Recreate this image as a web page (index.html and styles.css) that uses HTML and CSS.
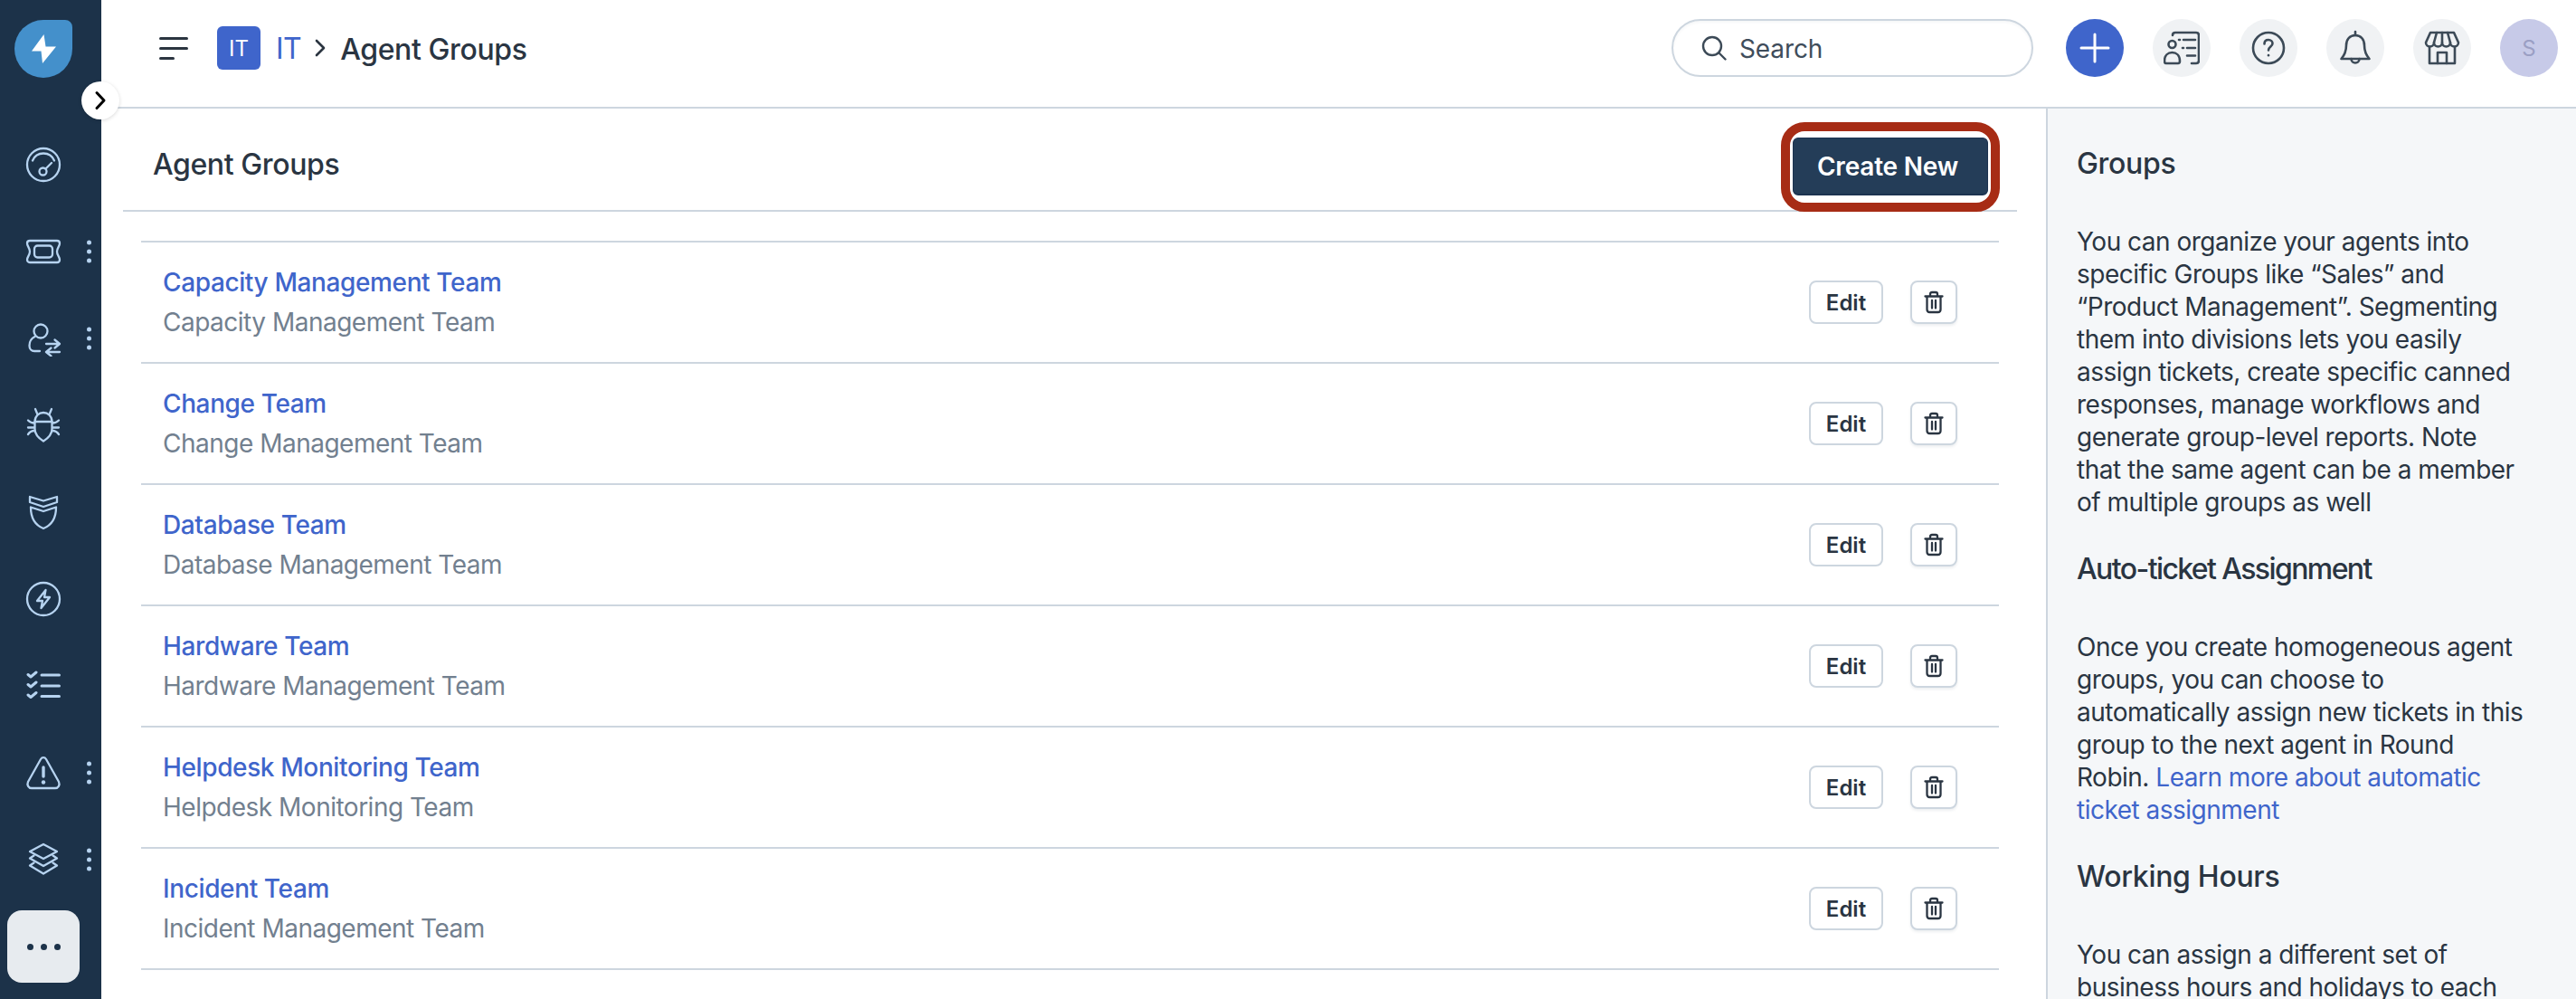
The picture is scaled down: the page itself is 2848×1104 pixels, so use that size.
FILE: index.html
```html
<!DOCTYPE html>
<html lang="en">
  <head>
    <meta charset="UTF-8" />
    <title>Agent Groups</title>
    <link rel="stylesheet" href="styles.css">
  </head>
  <body>
    <aside id="sidebar">
      <div class="logo">
        <svg viewBox="0 0 29 32" width="29" height="32"><path d="M14.500 0 1 18.500H11.500L13 32 28 13.500H16.500Z" fill="#fff"/></svg>
      </div>
      <a href="javascript:;" class="collapse">
        <svg viewBox="0 0 16 24" width="16" height="24"><path d="M4 3.500 12 12 4 20.500" fill="none" stroke="#000" stroke-width="3" stroke-linecap="round" stroke-linejoin="round"/></svg>
      </a>
      <nav class="side-nav">
        <a href="javascript:;" class="side-item">
          <svg class="side-icon" viewBox="0 0 40 40"><circle cx="20" cy="20" r="18"/><path d="M8 15.500A13 13 0 0 1 32 15.500"/><circle cx="19.500" cy="27.500" r="4"/><path d="M22.500 24.500 29 18"/></svg>
        </a>
        <a href="javascript:;" class="side-item">
          <svg class="side-icon" viewBox="0 0 40 40"><path d="M5 8H35C37 8 38 9.500 38 11 38 14 35 16 35 20 35 24 38 26 38 29 38 30.500 37 32 35 32H5C3 32 2 30.500 2 29 2 26 5 24 5 20 5 16 2 14 2 11 2 9.500 3 8 5 8Z"/><rect x="10" y="13.500" width="20" height="13" rx="3.500"/></svg>
          <span class="kebab"><i></i><i></i><i></i></span>
        </a>
        <a href="javascript:;" class="side-item">
          <svg class="side-icon" viewBox="0 0 40 40"><circle cx="17" cy="12" r="7.500"/><path d="M10.500 18C6.500 20 4.500 24 4.500 28 4.500 32 7 34 10 34H16"/><path d="M23 26H38M32.500 21.500 38 26 32.500 30.500"/><path d="M38 35H23M28.500 30.500 23 35 28.500 39.500"/></svg>
          <span class="kebab"><i></i><i></i><i></i></span>
        </a>
        <a href="javascript:;" class="side-item">
          <svg class="side-icon" viewBox="0 0 40 40"><path d="M11 2 13.500 8M29 2 26.500 8"/><path d="M10.500 16C10.500 10 15 6 20 6 25 6 29.500 10 29.500 16V24C29.500 30 24 35 20 37.500 16 35 10.500 30 10.500 24Z"/><path d="M10.500 16H29.500"/><path d="M10 17.500C7 17.500 5 16.500 3 14.500M10 22.500H3M10 26C7 26 5 27 3 30M30 17.500C33 17.500 35 16.500 37 14.500M30 22.500H37M30 26C33 26 35 27 37 30"/></svg>
        </a>
        <a href="javascript:;" class="side-item">
          <svg class="side-icon" viewBox="0 0 40 40"><path d="M5 3 20 7.500 35 3V9L20 14 5 9Z"/><path d="M6 14.500 20 19 34 14.500C34 26 30 34 20 38 10 34 6 26 6 14.500Z"/></svg>
        </a>
        <a href="javascript:;" class="side-item">
          <svg class="side-icon" viewBox="0 0 40 40"><circle cx="20" cy="20" r="18"/><path d="M22.500 10 13 22H19L17.500 30 27 18H21Z"/></svg>
        </a>
        <a href="javascript:;" class="side-item">
          <svg class="side-icon thick" viewBox="0 0 40 40"><path d="M3 7.500 6 10 12 5M3 18.500 6 21 12 16M3 30 6 32.500 12 27.500"/><path d="M18 8H37.500M18 20H37.500M18 31.500H37.500"/></svg>
        </a>
        <a href="javascript:;" class="side-item">
          <svg class="side-icon" viewBox="0 0 40 40"><path d="M17 5 3 30C1.500 33.500 3.500 37 7 37H33C36.500 37 38.500 33.500 37 30L23 5C21.500 2.500 18.500 2.500 17 5Z"/><path class="heavy" d="M20 14V24"/><circle class="dot" cx="20" cy="30.500" r="2.200"/></svg>
          <span class="kebab"><i></i><i></i><i></i></span>
        </a>
        <a href="javascript:;" class="side-item">
          <svg class="side-icon" viewBox="0 0 40 40"><path d="M20 3 35 11 20 19 5 11Z"/><path d="M9.500 15.500 5 18.500 20 27 35 18.500 30.500 15.500"/><path d="M9.500 23.500 5 26.500 20 35.500 35 26.500 30.500 23.500"/></svg>
          <span class="kebab"><i></i><i></i><i></i></span>
        </a>
        <a href="javascript:;" class="side-item">
          <span class="more"><i></i><i></i><i></i></span>
        </a>
      </nav>
    </aside>

    <div id="page">
      <header id="topbar">
        <a href="javascript:;" class="hamburger"><i></i><i></i><i></i></a>
        <span class="ws-badge">IT</span>
        <a href="javascript:;" class="crumb-link">IT</a>
        <svg class="crumb-sep" viewBox="0 0 12 20" width="12" height="20"><path d="M2 2 10 10 2 18" fill="none" stroke="#2b3540" stroke-width="2.600" stroke-linecap="round" stroke-linejoin="round"/></svg>
        <h1 class="crumb-title">Agent Groups</h1>

        <div class="search">
          <svg viewBox="0 0 28 28" width="28" height="28"><circle cx="12" cy="12" r="10" fill="none" stroke="#3c4a57" stroke-width="2.400"/><path d="M19.500 19.500 26.500 26.500" stroke="#3c4a57" stroke-width="2.400" stroke-linecap="round"/></svg>
          <span>Search</span>
        </div>

        <div class="top-actions">
          <a href="javascript:;" class="round add">
            <svg viewBox="0 0 36 36" width="36" height="36"><path d="M18 3V33M3 18H33" stroke="#fff" stroke-width="3" stroke-linecap="round"/></svg>
          </a>
          <a href="javascript:;" class="round">
            <svg class="top-icon" viewBox="0 0 40 40"><path d="M10 6C10 4 11 3 13 3H36C38 3 39 4 39 6V34C39 36 38 37 36 37H31"/><path d="M22 11H35M26 20H35M26 28.500H35M17 11H18M21 20H22"/><circle cx="9.500" cy="16" r="4"/><path d="M1 34.500C1 28 5 25 9.500 25 14 25 18 28 18 34.500 18 36.500 17 37 16 37H3C2 37 1 36.500 1 34.500Z"/></svg>
          </a>
          <a href="javascript:;" class="round">
            <svg class="top-icon" viewBox="0 0 40 40"><circle cx="20" cy="20" r="17"/><path d="M15.500 15.500C15.500 12.500 17.500 11 20 11 22.500 11 24.500 13 24.500 15 24.500 18.500 20 18.500 20 22.500"/><path d="M20 28V28.200"/></svg>
          </a>
          <a href="javascript:;" class="round">
            <svg class="top-icon" viewBox="0 0 40 40"><path d="M20 2V6"/><path d="M20 6C13.500 6 10 11 10 17 10 24 8 28 4.500 32H35.500C32 28 30 24 30 17 30 11 26.500 6 20 6Z"/><path d="M15.500 32C15.500 38 24.500 38 24.500 32"/></svg>
          </a>
          <a href="javascript:;" class="round">
            <svg class="top-icon" viewBox="0 0 40 40"><path d="M7 3H33L38 14C38 20 29 20 29 14 29 20 20 20 20 14 20 20 11 20 11 14 11 20 2 20 2 14Z"/><path d="M14 3 11 14M26 3 29 14M20 3V14"/><path d="M6 19V37H34V19"/><path d="M15 37V25H25V37"/></svg>
          </a>
          <span class="round avatar">S</span>
        </div>
      </header>

      <div id="content">
        <main id="groups">
          <div class="groups-head">
            <h2>Agent Groups</h2>
            <a href="javascript:;" class="create-new">Create New</a>
          </div>

          <ul class="group-list">
            <li class="group-row">
              <div class="group-text">
                <a href="javascript:;">Capacity Management Team</a>
                <p>Capacity Management Team</p>
              </div>
              <a href="javascript:;" class="btn-edit">Edit</a>
              <a href="javascript:;" class="btn-trash"><svg viewBox="0 0 24 28" width="24" height="28"><path d="M2.500 7.500H21.500M8 7.500V5C8 3.500 9 3 10 3H14C15 3 16 3.500 16 5V7.500M4.500 7.500V22C4.500 24 5.500 25 7.500 25H16.500C18.500 25 19.500 24 19.500 22V7.500M10 12V20.500M14 12V20.500"/></svg></a>
            </li>
            <li class="group-row">
              <div class="group-text">
                <a href="javascript:;">Change Team</a>
                <p>Change Management Team</p>
              </div>
              <a href="javascript:;" class="btn-edit">Edit</a>
              <a href="javascript:;" class="btn-trash"><svg viewBox="0 0 24 28" width="24" height="28"><path d="M2.500 7.500H21.500M8 7.500V5C8 3.500 9 3 10 3H14C15 3 16 3.500 16 5V7.500M4.500 7.500V22C4.500 24 5.500 25 7.500 25H16.500C18.500 25 19.500 24 19.500 22V7.500M10 12V20.500M14 12V20.500"/></svg></a>
            </li>
            <li class="group-row">
              <div class="group-text">
                <a href="javascript:;">Database Team</a>
                <p>Database Management Team</p>
              </div>
              <a href="javascript:;" class="btn-edit">Edit</a>
              <a href="javascript:;" class="btn-trash"><svg viewBox="0 0 24 28" width="24" height="28"><path d="M2.500 7.500H21.500M8 7.500V5C8 3.500 9 3 10 3H14C15 3 16 3.500 16 5V7.500M4.500 7.500V22C4.500 24 5.500 25 7.500 25H16.500C18.500 25 19.500 24 19.500 22V7.500M10 12V20.500M14 12V20.500"/></svg></a>
            </li>
            <li class="group-row">
              <div class="group-text">
                <a href="javascript:;">Hardware Team</a>
                <p>Hardware Management Team</p>
              </div>
              <a href="javascript:;" class="btn-edit">Edit</a>
              <a href="javascript:;" class="btn-trash"><svg viewBox="0 0 24 28" width="24" height="28"><path d="M2.500 7.500H21.500M8 7.500V5C8 3.500 9 3 10 3H14C15 3 16 3.500 16 5V7.500M4.500 7.500V22C4.500 24 5.500 25 7.500 25H16.500C18.500 25 19.500 24 19.500 22V7.500M10 12V20.500M14 12V20.500"/></svg></a>
            </li>
            <li class="group-row">
              <div class="group-text">
                <a href="javascript:;">Helpdesk Monitoring Team</a>
                <p>Helpdesk Monitoring Team</p>
              </div>
              <a href="javascript:;" class="btn-edit">Edit</a>
              <a href="javascript:;" class="btn-trash"><svg viewBox="0 0 24 28" width="24" height="28"><path d="M2.500 7.500H21.500M8 7.500V5C8 3.500 9 3 10 3H14C15 3 16 3.500 16 5V7.500M4.500 7.500V22C4.500 24 5.500 25 7.500 25H16.500C18.500 25 19.500 24 19.500 22V7.500M10 12V20.500M14 12V20.500"/></svg></a>
            </li>
            <li class="group-row">
              <div class="group-text">
                <a href="javascript:;">Incident Team</a>
                <p>Incident Management Team</p>
              </div>
              <a href="javascript:;" class="btn-edit">Edit</a>
              <a href="javascript:;" class="btn-trash"><svg viewBox="0 0 24 28" width="24" height="28"><path d="M2.500 7.500H21.500M8 7.500V5C8 3.500 9 3 10 3H14C15 3 16 3.500 16 5V7.500M4.500 7.500V22C4.500 24 5.500 25 7.500 25H16.500C18.500 25 19.500 24 19.500 22V7.500M10 12V20.500M14 12V20.500"/></svg></a>
            </li>
          </ul>
        </main>

        <aside id="help">
          <h3>Groups</h3>
          <p>You can organize your agents into specific Groups like “Sales” and “Product Management”. Segmenting them into divisions lets you easily assign tickets, create specific canned responses, manage workflows and generate group-level reports. Note<br>that the same agent can be a member of multiple groups as well</p>
          <h3 class="tight">Auto-ticket Assignment</h3>
          <p>Once you create homogeneous agent groups, you can choose to automatically assign new tickets in this group to the next agent in Round<br>Robin. <a href="javascript:;">Learn more about automatic ticket assignment</a></p>
          <h3>Working Hours</h3>
          <p>You can assign a different set of business hours and holidays to each</p>
        </aside>
      </div>
    </div>
  </body>
</html>
```

FILE: styles.css
```css
html,
body,
ul,
li,
h1,
h2,
h3,
p {
  margin: 0;
  padding: 0;
}

ul,
li {
  list-style: none;
}

a {
  text-decoration: none;
}

body {
  display: flex;
  height: 100vh;
  overflow: hidden;
  font-family: Inter, "Noto Sans", sans-serif;
  font-size: 28px;
  color: #2a3542;
  background-color: #fff;
}

/* sidebar */
#sidebar {
  flex: 0 0 112px;
  width: 112px;
  position: relative;
  background-color: #1c3249;
  padding-top: 22px;
  box-sizing: border-box;
}

.logo {
  display: flex;
  align-items: center;
  justify-content: center;
  width: 64px;
  height: 64px;
  margin: 0 0 48px 16px;
  background-color: #4490cb;
  border-radius: 50% 8px 50% 50%;
}

.collapse {
  display: flex;
  align-items: center;
  justify-content: center;
  position: absolute;
  top: 90px;
  left: 90px;
  width: 42px;
  height: 42px;
  border-radius: 50%;
  background-color: #fff;
  box-shadow: 0 1px 4px rgba(0, 0, 0, 0.15);
  z-index: 2;
}

.side-item {
  display: flex;
  align-items: center;
  justify-content: center;
  height: 96px;
  padding-right: 16px;
  position: relative;
}

.side-icon {
  width: 40px;
  height: 40px;
  fill: none;
  stroke: #b6d3f0;
  stroke-width: 2.300;
  stroke-linecap: round;
  stroke-linejoin: round;
}

.side-icon.thick {
  stroke-width: 3;
}

.side-icon .heavy {
  stroke-width: 3.400;
}

.side-icon .dot {
  fill: #b6d3f0;
  stroke: none;
}

.kebab {
  display: flex;
  flex-direction: column;
  gap: 5px;
  position: absolute;
  top: 50%;
  left: 96px;
  transform: translateY(-50%);
}

.kebab i {
  display: block;
  width: 5px;
  height: 5px;
  border-radius: 50%;
  background-color: #b6d3f0;
}

.more {
  display: flex;
  align-items: center;
  justify-content: center;
  gap: 8px;
  width: 80px;
  height: 80px;
  border-radius: 16px;
  background-color: #e7ebef;
}

.more i {
  display: block;
  width: 7px;
  height: 7px;
  border-radius: 50%;
  background-color: #1c3249;
}

/* top bar */
#page {
  flex: 1;
  display: flex;
  flex-direction: column;
  min-width: 0;
}

#topbar {
  display: flex;
  align-items: center;
  flex: 0 0 120px;
  box-sizing: border-box;
  padding: 0 20px 12px 64px;
  border-bottom: 2px solid #cdd6df;
}

.hamburger {
  display: flex;
  flex-direction: column;
  gap: 8px;
  width: 32px;
  margin-right: 32px;
}

.hamburger i {
  display: block;
  height: 3px;
  border-radius: 2px;
  background-color: #2b3540;
}

.hamburger i:last-child {
  width: 17px;
}

.ws-badge {
  display: flex;
  align-items: center;
  justify-content: center;
  width: 48px;
  height: 48px;
  border-radius: 6px;
  background-color: #3f65cb;
  color: #fff;
  font-size: 24px;
}

.crumb-link {
  margin-left: 17px;
  font-size: 32px;
  letter-spacing: -0.5px;
  color: #3f65cb;
}

.crumb-sep {
  margin-left: 15px;
}

.crumb-title {
  margin-left: 16px;
  padding-top: 2px;
  font-size: 32px;
  font-weight: 550;
  letter-spacing: -0.4px;
  color: #2a3542;
}

.search {
  display: flex;
  align-items: center;
  gap: 14px;
  box-sizing: border-box;
  width: 400px;
  height: 64px;
  margin-left: auto;
  padding-left: 31px;
  border: 2px solid #cdd6df;
  border-radius: 32px;
  color: #3f4d5b;
  letter-spacing: -0.1px;
  box-shadow: inset 0 2px 3px rgba(24, 50, 71, 0.04);
}

.search span {
  padding-top: 2px;
}

.top-actions {
  display: flex;
  align-items: center;
  gap: 32px;
  margin-left: 36px;
}

.round {
  display: flex;
  align-items: center;
  justify-content: center;
  width: 64px;
  height: 64px;
  border-radius: 50%;
  background-color: #f0f2f4;
}

.round.add {
  background-color: #3f65cb;
}

.round.avatar {
  background-color: #c7cae8;
  color: #9b9fc4;
  font-size: 24px;
}

.top-icon {
  width: 40px;
  height: 40px;
  fill: none;
  stroke: #3c4a57;
  stroke-width: 2.600;
  stroke-linecap: round;
  stroke-linejoin: round;
}

/* content */
#content {
  flex: 1;
  display: flex;
  min-height: 0;
}

#groups {
  flex: 1;
  min-width: 0;
  padding: 0 32px 0 24px;
}

.groups-head {
  display: flex;
  align-items: center;
  justify-content: space-between;
  height: 114px;
  box-sizing: border-box;
  padding: 32px 32px 16px 33px;
  border-bottom: 2px solid #cdd6df;
}

.groups-head h2 {
  font-size: 32px;
  font-weight: 550;
  letter-spacing: -0.4px;
  margin-top: -6px;
}

.create-new {
  display: block;
  position: relative;
  box-sizing: border-box;
  width: 216px;
  height: 64px;
  line-height: 62px;
  padding-right: 6px;
  text-align: center;
  border-radius: 6px;
  background-color: #243d58;
  border: 1px solid #1c3350;
  border-bottom-width: 2px;
  color: #fff;
  font-weight: 600;
  letter-spacing: -0.2px;
}

/* annotation ring round the button */
.create-new::after {
  content: "";
  position: absolute;
  top: -18px;
  right: -14px;
  bottom: -20px;
  left: -14px;
  border: 10px solid #a72c15;
  border-radius: 26px;
}

.group-list {
  margin: 32px 20px 0;
  border-top: 2px solid #cdd6df;
}

.group-row {
  display: flex;
  align-items: center;
  box-sizing: border-box;
  height: 134px;
  padding: 0 46px 0 24px;
  border-bottom: 2px solid #cdd6df;
}

.group-text {
  flex: 1;
  min-width: 0;
}

.group-text a {
  display: block;
  line-height: 44px;
  font-weight: 500;
  letter-spacing: -0.38px;
  color: #3f65cb;
}

.group-text p {
  line-height: 44px;
  letter-spacing: -0.5px;
  color: #72808f;
}

.btn-edit,
.btn-trash {
  display: flex;
  align-items: center;
  justify-content: center;
  box-sizing: border-box;
  height: 48px;
  border: 2px solid #cdd6df;
  border-radius: 8px;
  background-color: #fff;
}

.btn-edit {
  width: 82px;
  margin-right: 30px;
  font-size: 24px;
  font-weight: 600;
  color: #2a3542;
}

.btn-trash {
  width: 52px;
  box-shadow: 0 2px 3px rgba(24, 50, 71, 0.08);
}

.btn-trash svg {
  fill: none;
  stroke: #2a3542;
  stroke-width: 2.300;
  stroke-linecap: round;
  stroke-linejoin: round;
}

/* help panel */
#help {
  flex: 0 0 586px;
  box-sizing: border-box;
  padding: 41px 44px 0 32px;
  border-left: 2px solid #cdd6df;
  background-color: #f5f7f9;
  overflow: hidden;
}

#help h3 {
  font-size: 32px;
  font-weight: 550;
  line-height: 40px;
  letter-spacing: -0.3px;
}

#help h3.tight {
  letter-spacing: -1.6px;
}

#help p {
  line-height: 36px;
  margin: 48px 0 36px;
  letter-spacing: -0.5px;
}

#help a {
  color: #3f65cb;
}
```
